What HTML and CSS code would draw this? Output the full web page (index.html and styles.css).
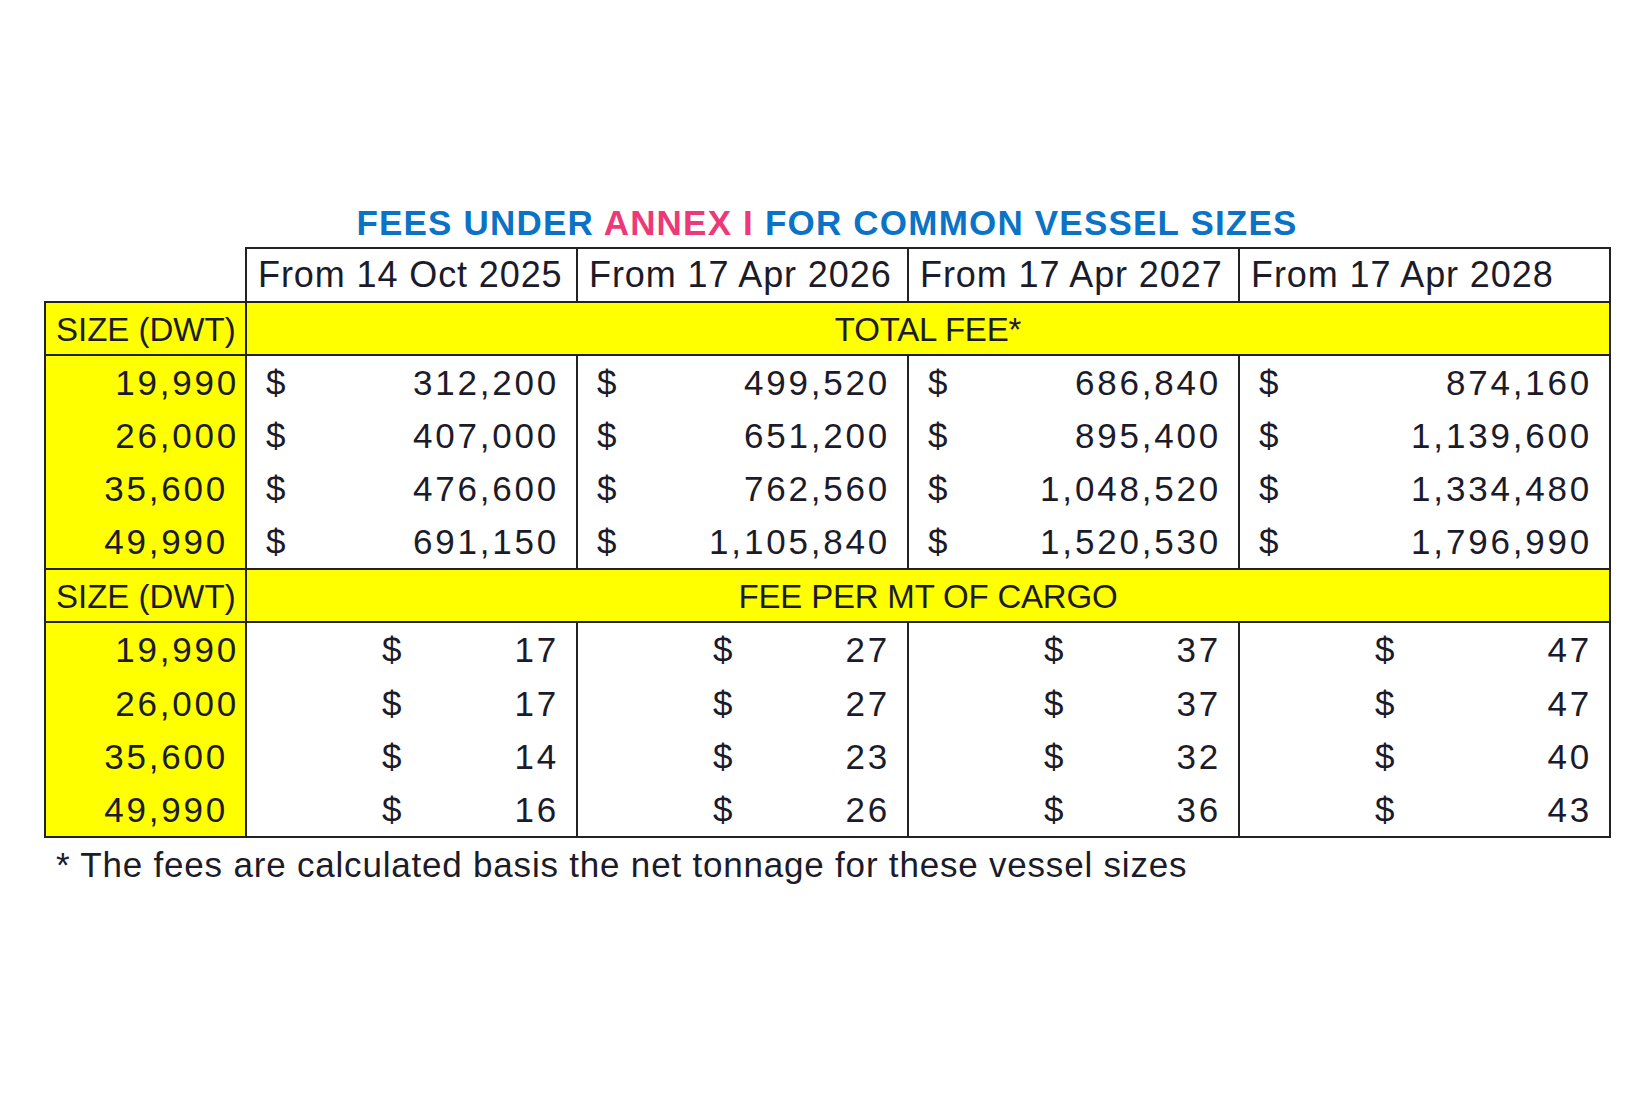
FILE: index.html
```html
<!DOCTYPE html>
<html lang="en">
<head>
<meta charset="utf-8">
<title>Fees under Annex I</title>
<link rel="stylesheet" href="styles.css">
</head>
<body>
<main class="page">
  <h1 class="title">FEES UNDER <span class="annex">ANNEX I</span> FOR COMMON VESSEL SIZES</h1>
  <table class="fees">
    <colgroup>
      <col class="c-size">
      <col class="c-date">
      <col class="c-date">
      <col class="c-date">
      <col class="c-last">
    </colgroup>
    <thead>
      <tr class="r-head">
        <th class="blank"></th>
        <th class="date">From 14 Oct 2025</th>
        <th class="date">From 17 Apr 2026</th>
        <th class="date">From 17 Apr 2027</th>
        <th class="date">From 17 Apr 2028</th>
      </tr>
    </thead>
    <tbody class="sec">
      <tr class="r-band">
        <td class="band-size">SIZE (DWT)</td>
        <td class="band-title" colspan="4">TOTAL FEE*</td>
      </tr>
      <tr class="r-data">
        <td class="size">19,990</td>
        <td class="amt"><div class="money"><span>$</span><span>312,200</span></div></td>
        <td class="amt"><div class="money"><span>$</span><span>499,520</span></div></td>
        <td class="amt"><div class="money"><span>$</span><span>686,840</span></div></td>
        <td class="amt"><div class="money"><span>$</span><span>874,160</span></div></td>
      </tr>
      <tr class="r-data">
        <td class="size">26,000</td>
        <td class="amt"><div class="money"><span>$</span><span>407,000</span></div></td>
        <td class="amt"><div class="money"><span>$</span><span>651,200</span></div></td>
        <td class="amt"><div class="money"><span>$</span><span>895,400</span></div></td>
        <td class="amt"><div class="money"><span>$</span><span>1,139,600</span></div></td>
      </tr>
      <tr class="r-data">
        <td class="size wide">35,600</td>
        <td class="amt"><div class="money"><span>$</span><span>476,600</span></div></td>
        <td class="amt"><div class="money"><span>$</span><span>762,560</span></div></td>
        <td class="amt"><div class="money"><span>$</span><span>1,048,520</span></div></td>
        <td class="amt"><div class="money"><span>$</span><span>1,334,480</span></div></td>
      </tr>
      <tr class="r-data">
        <td class="size wide">49,990</td>
        <td class="amt"><div class="money"><span>$</span><span>691,150</span></div></td>
        <td class="amt"><div class="money"><span>$</span><span>1,105,840</span></div></td>
        <td class="amt"><div class="money"><span>$</span><span>1,520,530</span></div></td>
        <td class="amt"><div class="money"><span>$</span><span>1,796,990</span></div></td>
      </tr>
    </tbody>
    <tbody class="sec">
      <tr class="r-band">
        <td class="band-size">SIZE (DWT)</td>
        <td class="band-title" colspan="4">FEE PER MT OF CARGO</td>
      </tr>
      <tr class="r-data">
        <td class="size">19,990</td>
        <td class="amt"><div class="money per"><span>$</span><span>17</span></div></td>
        <td class="amt"><div class="money per"><span>$</span><span>27</span></div></td>
        <td class="amt"><div class="money per"><span>$</span><span>37</span></div></td>
        <td class="amt"><div class="money per"><span>$</span><span>47</span></div></td>
      </tr>
      <tr class="r-data">
        <td class="size">26,000</td>
        <td class="amt"><div class="money per"><span>$</span><span>17</span></div></td>
        <td class="amt"><div class="money per"><span>$</span><span>27</span></div></td>
        <td class="amt"><div class="money per"><span>$</span><span>37</span></div></td>
        <td class="amt"><div class="money per"><span>$</span><span>47</span></div></td>
      </tr>
      <tr class="r-data">
        <td class="size wide">35,600</td>
        <td class="amt"><div class="money per"><span>$</span><span>14</span></div></td>
        <td class="amt"><div class="money per"><span>$</span><span>23</span></div></td>
        <td class="amt"><div class="money per"><span>$</span><span>32</span></div></td>
        <td class="amt"><div class="money per"><span>$</span><span>40</span></div></td>
      </tr>
      <tr class="r-data r-last">
        <td class="size wide">49,990</td>
        <td class="amt"><div class="money per"><span>$</span><span>16</span></div></td>
        <td class="amt"><div class="money per"><span>$</span><span>26</span></div></td>
        <td class="amt"><div class="money per"><span>$</span><span>36</span></div></td>
        <td class="amt"><div class="money per"><span>$</span><span>43</span></div></td>
      </tr>
    </tbody>
  </table>
  <p class="note">* The fees are calculated basis the net tonnage for these vessel sizes</p>
</main>
</body>
</html>
```

FILE: styles.css
```css
html, body {
  margin: 0;
  padding: 0;
  background: #ffffff;
}

body {
  font-family: "Liberation Sans", Arial, sans-serif;
  color: #1b1b2a;
}

.page {
  width: 1645px;
  height: 1097px;
  padding: 203px 0 0 44px;
  box-sizing: border-box;
}

.title {
  width: 1566px;
  margin: 0 0 4px 0;
  height: 40px;
  line-height: 40px;
  font-size: 35px;
  font-weight: 700;
  text-align: center;
  color: #0b73c6;
  letter-spacing: 1.2px;
}

.annex {
  color: #ee3877;
}

.fees {
  border-collapse: collapse;
  table-layout: fixed;
  width: 1566px;
}

.c-size { width: 201px; }
.c-date { width: 331px; }
.c-last { width: 371px; }

.fees th,
.fees td {
  padding: 0;
  vertical-align: bottom;
  white-space: nowrap;
  font-weight: 400;
}

.r-head th {
  height: 46px;
}

.blank {
  border: none;
}

.date {
  border: 2px solid #222;
  text-align: left;
  padding: 0 0 6px 11px !important;
  font-size: 36px;
  line-height: 40px;
  letter-spacing: 0.9px;
}

.r-band td {
  background: #ffff00;
  border: 2px solid #222;
  height: 46px;
  font-size: 33px;
  line-height: 38px;
  padding-bottom: 5px;
}

.band-size {
  text-align: left;
  padding-left: 10px !important;
}

.band-title {
  text-align: center;
  letter-spacing: -0.2px;
}

.r-data td {
  height: 47.1px;
  border-left: 2px solid #222;
  border-right: 2px solid #222;
  font-size: 35px;
  line-height: 40px;
  padding-bottom: 6px;
  letter-spacing: 2.8px;
}

.r-last td {
  border-bottom: 2px solid #222;
}

.size {
  background: #ffff00;
  text-align: right;
  padding-right: 6px !important;
}

.size.wide {
  padding-right: 17px !important;
}

.money {
  display: flex;
  justify-content: space-between;
  padding: 0 17px 0 19px;
}

.money.per {
  padding-left: 135px;
}

.note {
  margin: 7px 0 0 12px;
  font-size: 35px;
  line-height: 40px;
  letter-spacing: 0.8px;
}
```
